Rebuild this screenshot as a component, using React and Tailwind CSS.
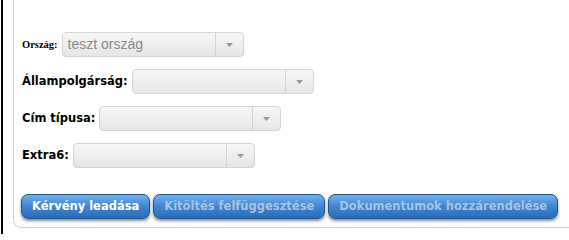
function Select({ value }) {
    return (
        <div className="flex h-[25px] w-[182px] shrink-0 items-center rounded-[4px] border border-[#d4d4d4] bg-gradient-to-b from-[#f6f6f6] to-[#e6e6e6]">
            <div className="flex-1 truncate pl-[5px] font-['Liberation_Sans',sans-serif] text-[14px] text-[#8a8a8a]">
                {value}
            </div>
            <div className="flex h-full w-[28px] items-center justify-center border-l border-[#d4d4d4]">
                <svg width="7" height="4" viewBox="0 0 7 4">
                    <path d="M0 0h7L3.5 4z" fill="#999" />
                </svg>
            </div>
        </div>
    );
}

function Field({ label, value, small }) {
    return (
        <div className="flex items-center gap-[4px]">
            <span
                className={
                    small
                        ? "whitespace-nowrap font-['Liberation_Serif',serif] text-[10.5px] font-bold text-black"
                        : "whitespace-nowrap font-['DejaVu_Sans',sans-serif] text-[11.5px] font-bold text-black"
                }
            >
                {label}
            </span>
            <Select value={value} />
        </div>
    );
}

function Button({ children, active }) {
    return (
        <button
            className={`h-[25px] shrink-0 whitespace-nowrap rounded-[7px] border border-[#1d5590] bg-gradient-to-b from-[#6fb0ec] via-[#3f86d2] to-[#2a6cb8] px-[10px] font-['DejaVu_Sans',sans-serif] text-[11.5px] font-bold shadow-[0_2px_3px_rgba(0,0,0,0.45)] ${
                active ? 'text-white' : 'text-[#a6c4e4]'
            }`}
        >
            {children}
        </button>
    );
}

export default function App() {
    return (
        <div className="h-[234px] w-[569px] overflow-hidden bg-white">
            <div className="ml-px h-full w-[600px] border-l-2 border-black pl-[10px]">
                <div className="flex h-[228px] flex-col rounded-bl-[8px] border-b border-l border-[#cfcfcf] pl-[7px]">
                    <div className="mt-[32px] flex flex-col gap-[12px] pl-px">
                        <Field label="Ország:" value="teszt ország" small />
                        <Field label="Állampolgárság:" />
                        <Field label="Cím típusa:" />
                        <Field label="Extra6:" />
                    </div>
                    <div className="mt-[26px] flex gap-[3px]">
                        <Button active>Kérvény leadása</Button>
                        <Button>Kitöltés felfüggesztése</Button>
                        <Button>Dokumentumok hozzárendelése</Button>
                    </div>
                </div>
            </div>
        </div>
    );
}
